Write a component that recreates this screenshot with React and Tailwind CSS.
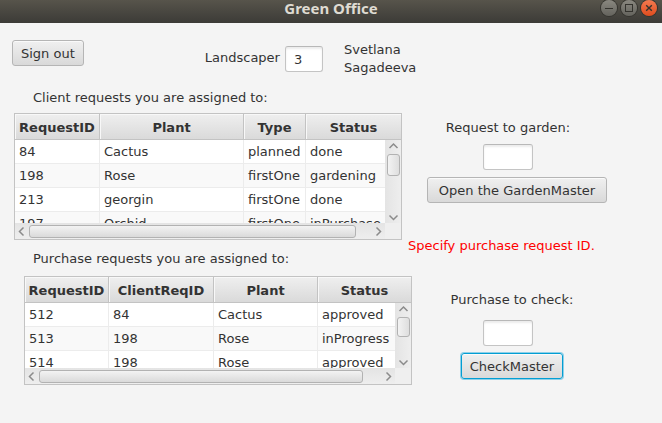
const clientTable = {
  label: "Client requests you are assigned to:",
  columns: ["RequestID", "Plant", "Type", "Status"],
  widths: ["w-[85px]", "w-[144px]", "w-[62px]", ""],
  rows: [
    ["84", "Cactus", "planned", "done"],
    ["198", "Rose", "firstOne", "gardening"],
    ["213", "georgin", "firstOne", "done"],
    ["197", "Orchid", "firstOne", "inPurchase"],
  ],
};

const purchaseTable = {
  label: "Purchase requests you are assigned to:",
  columns: ["RequestID", "ClientReqID", "Plant", "Status"],
  widths: ["w-[84px]", "w-[105px]", "w-[104px]", ""],
  rows: [
    ["512", "84", "Cactus", "approved"],
    ["513", "198", "Rose", "inProgress"],
    ["514", "198", "Rose", "approved"],
  ],
};

const arrowPaths = {
  up: "M1.5 7 L5.5 3 L9.5 7",
  down: "M1.5 3.5 L5.5 7.5 L9.5 3.5",
  left: "M7.5 1.5 L3.5 5.5 L7.5 9.5",
  right: "M3.5 1.5 L7.5 5.5 L3.5 9.5",
};

function Arrow({ direction }) {
  return (
    <svg width="11" height="11" viewBox="0 0 11 11" className="shrink-0" aria-hidden="true">
      <path d={arrowPaths[direction]} fill="none" stroke="#8b8b8b" strokeWidth="1.5" />
    </svg>
  );
}

function PushButton({ children, className }) {
  return (
    <button
      type="button"
      className={`flex h-[26px] shrink-0 items-end rounded-[3px] border bg-linear-to-b from-[#f0f0f0] to-[#d9d9d9] pb-[2px] whitespace-nowrap shadow-[inset_0_1px_0_#fafafa] ${className}`}
    >
      {children}
    </button>
  );
}

function TextBox({ id, className, defaultValue }) {
  return (
    <input
      id={id}
      type="text"
      defaultValue={defaultValue}
      className={`h-[26px] rounded-[3px] border border-[#c4c4c4] border-t-[#b8b8b8] bg-white px-2 shadow-[inset_0_2px_2px_#ededed] outline-none ${className}`}
    />
  );
}

function DataTable({ data, bodyHeight, thumbWidth, thumbHeight, className }) {
  return (
    <div className={`border border-[#c3c3c3] bg-white ${className}`}>
      <div className={`relative overflow-hidden ${bodyHeight}`}>
        <table className="w-full table-fixed border-separate border-spacing-0" aria-label={data.label}>
          <thead>
            <tr className="bg-linear-to-b from-[#efefef] to-[#d9d9d9]">
              {data.columns.map((name, i) => (
                <th
                  key={name}
                  className={`h-[26px] border-b border-[#c3c3c3] p-0 pt-[2px] text-center font-bold whitespace-nowrap shadow-[inset_1px_1px_0_#f8f8f8] not-last:border-r ${data.widths[i]}`}
                >
                  {name}
                </th>
              ))}
            </tr>
          </thead>
          <tbody>
            {data.rows.map((row) => (
              <tr key={row[0]} className="even:bg-[#f9f9f9]">
                {row.map((cell, i) => (
                  <td
                    key={i}
                    className="h-6 border-b border-[#ececec] p-0 pl-1 whitespace-nowrap not-last:border-r"
                  >
                    {cell}
                  </td>
                ))}
              </tr>
            ))}
          </tbody>
        </table>
        <div className="absolute top-[26px] right-0 bottom-0 flex w-4 flex-col items-center bg-linear-to-r from-[#e4e4e4] to-[#eeeeee] pt-px">
          <Arrow direction="up" />
          <div
            className={`mt-[2px] w-[13px] rounded-[3px] border border-[#b2b2b2] bg-linear-to-r from-[#f3f3f3] to-[#dedede] ${thumbHeight}`}
          />
          <div className="flex-1" />
          <Arrow direction="down" />
        </div>
      </div>
      <div className="flex h-4 bg-[#efefef]">
        <div className="flex flex-1 items-center bg-linear-to-b from-[#e4e4e4] to-[#eeeeee] px-px">
          <Arrow direction="left" />
          <div
            className={`ml-[2px] h-[13px] rounded-[3px] border border-[#b2b2b2] bg-linear-to-b from-[#f3f3f3] to-[#dadada] ${thumbWidth}`}
          />
          <div className="flex-1" />
          <Arrow direction="right" />
        </div>
        <div className="w-4" />
      </div>
    </div>
  );
}

function WindowButton({ label, className, children }) {
  return (
    <button
      type="button"
      aria-label={label}
      className={`flex size-4 items-center justify-center rounded-full shadow-[0_0_0_1px_#35342f] ${className}`}
    >
      <svg width="16" height="16" viewBox="0 0 16 16" fill="none" stroke="#34332e" aria-hidden="true">
        {children}
      </svg>
    </button>
  );
}

function TitleBar() {
  return (
    <header className="grid h-[23px] grid-cols-[1fr_auto_1fr] bg-linear-to-b from-[#57544b] to-[#3c3b37]">
      <span />
      <h1 className="font-['Noto_Sans','Open_Sans',sans-serif] text-[15px] leading-4 font-bold text-[#dfdbd2]">
        Green Office
      </h1>
      <div className="flex justify-end gap-1 pr-[5px]">
        <WindowButton label="Minimize" className="bg-linear-to-b from-[#8a8880] to-[#64635d]">
          <path d="M4 8.5h8" />
        </WindowButton>
        <WindowButton label="Maximize" className="bg-linear-to-b from-[#8a8880] to-[#64635d]">
          <rect x="4.5" y="4.5" width="7" height="7" />
        </WindowButton>
        <WindowButton label="Close" className="bg-linear-to-b from-[#f4794f] to-[#df4c1c]">
          <path d="M5.2 5.2l5.6 5.6M10.8 5.2l-5.6 5.6" strokeWidth="1.4" />
        </WindowButton>
      </div>
    </header>
  );
}

export default function App() {
  return (
    <div className="min-h-screen bg-[#f4f4f4] font-['DejaVu_Sans',sans-serif] text-[13px] leading-[18px] text-[#333333]">
      <TitleBar />
      <div className="flex items-start pt-[17px] pl-3">
        <PushButton className="border-[#b5b5b5] px-2">Sign out</PushButton>
        <label htmlFor="landscaper" className="mt-[9px] ml-[121px]">
          Landscaper
        </label>
        <TextBox id="landscaper" defaultValue="3" className="mt-[6px] ml-[5px] w-[38px]" />
        <p className="mt-px ml-[21px] w-20">Svetlana Sagadeeva</p>
      </div>
      <main className="mt-3 flex pb-4 pl-[14px]">
        <section className="min-w-0 flex-1">
          <h2 className="ml-[19px]">{clientTable.label}</h2>
          <DataTable
            data={clientTable}
            bodyHeight="h-[109px]"
            thumbWidth="w-[327px]"
            thumbHeight="h-[22px]"
            className="mt-[6px] mr-[10px]"
          />
          <h2 className="mt-[10px] ml-[19px]">{purchaseTable.label}</h2>
          <DataTable
            data={purchaseTable}
            bodyHeight="h-[91px]"
            thumbWidth="w-[324px]"
            thumbHeight="h-5"
            className="mt-2 ml-[10px]"
          />
        </section>
        <section className="mr-[58px] flex w-48 flex-col items-center pt-[30px]">
          <label htmlFor="garden">Request to garden:</label>
          <TextBox id="garden" className="mt-[7px] w-[50px]" />
          <div className="mt-[7px] flex pl-[18px]">
            <PushButton className="border-[#b5b5b5] px-[11px]">Open the GardenMaster</PushButton>
          </div>
          <p className="mt-[34px] -ml-1 self-start whitespace-nowrap text-[#ff0000]" role="alert">
            Specify purchase request ID.
          </p>
          <label htmlFor="purchase" className="mt-9 pl-2">
            Purchase to check:
          </label>
          <TextBox id="purchase" className="mt-[11px] w-[50px]" />
          <div className="mt-[7px] flex pl-2">
            <PushButton className="border-[#039ed3] px-2 ring-1 ring-[#8fd0e8]">CheckMaster</PushButton>
          </div>
        </section>
      </main>
    </div>
  );
}
